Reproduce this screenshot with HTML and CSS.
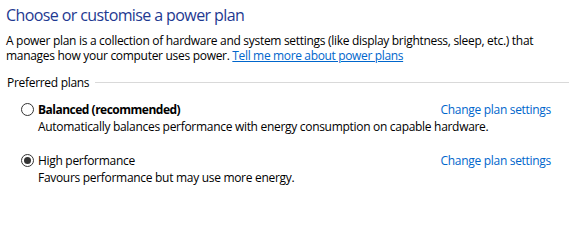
FILE: index.html
```html
<!DOCTYPE html>
<html>
<head>
<meta charset="utf-8">
<link rel="stylesheet" href="styles.css">
</head>
<body>
<main class="page">
  <h1 class="title">Choose or customise a power plan</h1>
  <p class="intro">A power plan is a collection of hardware and system settings (like display brightness, sleep, etc.) that manages how your computer uses power. <a class="link underline" href="#">Tell me more about power plans</a></p>
  <div class="group-head">
    <span class="group-label">Preferred plans</span>
    <span class="group-rule"></span>
  </div>
  <div class="plans">
    <div class="plan">
      <div class="plan-row">
        <svg class="radio" width="13" height="13" viewBox="0 0 13 13"><circle cx="6.5" cy="6.5" r="6" fill="#fff" stroke="#333" stroke-width="1"/></svg>
        <span class="plan-name bold">Balanced (recommended)</span>
        <a class="link change" href="#">Change plan settings</a>
      </div>
      <div class="plan-desc">Automatically balances performance with energy consumption on capable hardware.</div>
    </div>
    <div class="plan">
      <div class="plan-row">
        <svg class="radio" width="13" height="13" viewBox="0 0 13 13"><circle cx="6.5" cy="6.5" r="6" fill="#fff" stroke="#333" stroke-width="1"/><circle cx="6.5" cy="6.5" r="3.5" fill="#333"/></svg>
        <span class="plan-name">High performance</span>
        <a class="link change" href="#">Change plan settings</a>
      </div>
      <div class="plan-desc">Favours performance but may use more energy.</div>
    </div>
  </div>
</main>
</body>
</html>
```
FILE: styles.css
```css
html, body {
  margin: 0;
  padding: 0;
  background: #fff;
}
.page {
  font-family: "Open Sans", "Noto Sans", sans-serif;
  font-size: 12px;
  letter-spacing: -0.3px;
  color: #000;
  padding: 4px 0 0 6px;
}
.title {
  margin: 0;
  font-size: 16px;
  font-weight: 400;
  letter-spacing: -0.6px;
  line-height: 22px;
  color: #1e3991;
}
.intro {
  margin: 7px 0 0 0;
  line-height: 15px;
  width: 540px;
}
.link {
  color: #0066cc;
  text-decoration: none;
}
.underline {
  text-decoration: underline;
  letter-spacing: -0.35px;
}
.group-head {
  display: flex;
  align-items: center;
  margin-top: 12px;
  height: 15px;
}
.group-label {
  padding-left: 1px;
}
.group-rule {
  flex: 1;
  height: 1px;
  background: #d9d9d9;
  margin-left: 6px;
}
.plans {
  padding-left: 15px;
  margin-top: 12px;
}
.plan {
  margin-bottom: 19px;
}
.plan-row {
  display: flex;
  align-items: center;
  height: 15px;
}
.radio {
  display: block;
  margin-right: 4px;
}
.plan-name {
  flex: 1;
}
.bold {
  font-weight: 700;
  letter-spacing: -0.5px;
}
.change {
  margin-right: 18px;
}
.plan-desc {
  padding-left: 17px;
  margin-top: 2px;
  line-height: 15px;
}
```
